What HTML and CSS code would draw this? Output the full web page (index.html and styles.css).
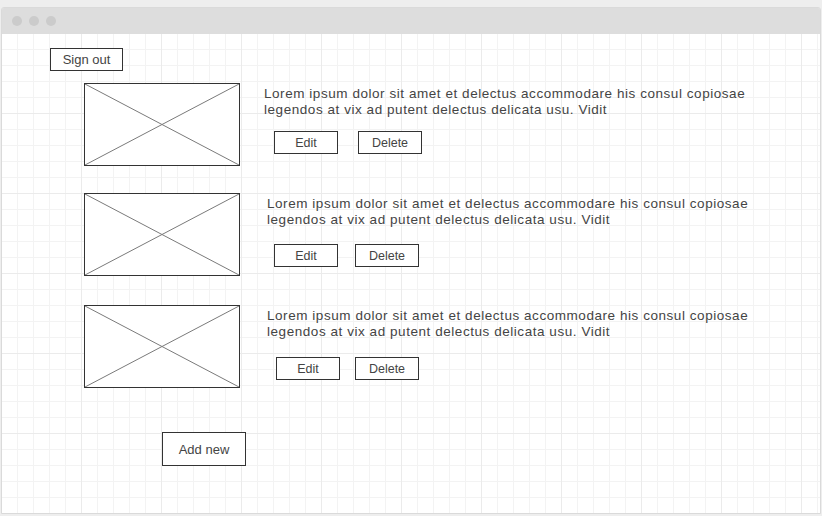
FILE: index.html
```html
<!DOCTYPE html>
<html lang="en">
<head>
<meta charset="utf-8">
<title>Items</title>
<link rel="stylesheet" href="styles.css">
</head>
<body>
<div class="window">
  <div class="titlebar">
    <span class="dot"></span><span class="dot"></span><span class="dot"></span>
  </div>
  <div class="canvas">
    <button class="btn btn-signout">Sign out</button>
    <div class="items">
      <div class="item item-1">
        <div class="thumb"><svg viewBox="0 0 154 81" preserveAspectRatio="none"><line x1="0" y1="0" x2="154" y2="81"/><line x1="154" y1="0" x2="0" y2="81"/></svg></div>
        <div class="body">
          <p class="desc">Lorem ipsum dolor sit amet et delectus accommodare his consul copiosae legendos at vix ad putent delectus delicata usu. Vidit</p>
          <div class="actions"><button class="btn btn-sm">Edit</button><button class="btn btn-sm">Delete</button></div>
        </div>
      </div>
      <div class="item item-2">
        <div class="thumb"><svg viewBox="0 0 154 81" preserveAspectRatio="none"><line x1="0" y1="0" x2="154" y2="81"/><line x1="154" y1="0" x2="0" y2="81"/></svg></div>
        <div class="body">
          <p class="desc">Lorem ipsum dolor sit amet et delectus accommodare his consul copiosae legendos at vix ad putent delectus delicata usu. Vidit</p>
          <div class="actions"><button class="btn btn-sm">Edit</button><button class="btn btn-sm">Delete</button></div>
        </div>
      </div>
      <div class="item item-3">
        <div class="thumb"><svg viewBox="0 0 154 81" preserveAspectRatio="none"><line x1="0" y1="0" x2="154" y2="81"/><line x1="154" y1="0" x2="0" y2="81"/></svg></div>
        <div class="body">
          <p class="desc">Lorem ipsum dolor sit amet et delectus accommodare his consul copiosae legendos at vix ad putent delectus delicata usu. Vidit</p>
          <div class="actions"><button class="btn btn-sm">Edit</button><button class="btn btn-sm">Delete</button></div>
        </div>
      </div>
    </div>
    <button class="btn btn-add">Add new</button>
  </div>
</div>
</body>
</html>
```
FILE: styles.css
```css
* { box-sizing: border-box; }

html, body {
  margin: 0;
  padding: 0;
  background: #eeeeee;
  font-family: "Liberation Sans", Arial, sans-serif;
  color: #444;
}

.window {
  margin: 7px 1px 0 1px;
  width: 820px;
  height: 507px;
  border: 1px solid #dadada;
  border-radius: 3px 3px 0 0;
  display: flex;
  flex-direction: column;
  overflow: hidden;
}

.titlebar {
  height: 26px;
  background: #dddddd;
  display: flex;
  align-items: center;
  gap: 7px;
  padding-left: 10px;
  flex: none;
}

.dot {
  width: 10px;
  height: 10px;
  border-radius: 50%;
  background: #cbcbcb;
}

.canvas {
  flex: 1;
  display: flex;
  flex-direction: column;
  align-items: flex-start;
  padding: 14px 0 0 48px;
  background:
    linear-gradient(to right, #ebebeb 1px, transparent 1px) -1px -1px / 80px 80px,
    linear-gradient(to bottom, #ebebeb 1px, transparent 1px) -1px -1px / 80px 80px,
    linear-gradient(to right, #f3f3f3 1px, transparent 1px) -1px -1px / 16px 16px,
    linear-gradient(to bottom, #f3f3f3 1px, transparent 1px) -1px -1px / 16px 16px,
    #ffffff;
}

.btn {
  display: flex;
  align-items: center;
  justify-content: center;
  margin: 0;
  padding: 0;
  background: #fff;
  border: 1px solid #333;
  border-radius: 0;
  font-family: "Liberation Sans", Arial, sans-serif;
  color: #444;
  cursor: pointer;
}

.btn-signout {
  width: 73px;
  height: 23px;
  font-size: 13px;
}

.btn-sm {
  width: 64px;
  height: 23px;
  font-size: 12.5px;
}

.btn-add {
  width: 84px;
  height: 34px;
  font-size: 13px;
  margin: 44px 0 0 112px;
}

.items {
  margin: 12px 0 0 34px;
  display: flex;
  flex-direction: column;
}

.item {
  display: flex;
  align-items: flex-start;
}

.item-2 { margin-top: 27px; }
.item-3 { margin-top: 29px; }

.thumb {
  width: 156px;
  height: 83px;
  border: 1px solid #333;
  background: #fff;
  flex: none;
}

.thumb svg {
  display: block;
  width: 154px;
  height: 81px;
}

.thumb line {
  stroke: #7a7a7a;
  stroke-width: 1;
}

.body {
  margin-left: 27px;
  padding-top: 3px;
}

.item-1 .body { margin-left: 24px; }

.desc {
  margin: 0;
  width: 500px;
  font-size: 13.5px;
  line-height: 16px;
  letter-spacing: 0.55px;
  color: #444;
}

.actions {
  display: flex;
}

.item-1 .actions { margin-top: 13px; padding-left: 10px; gap: 20px; }
.item-2 .actions { margin-top: 16px; padding-left: 7px; gap: 17px; }
.item-3 .actions { margin-top: 17px; padding-left: 9px; gap: 15px; }
```
